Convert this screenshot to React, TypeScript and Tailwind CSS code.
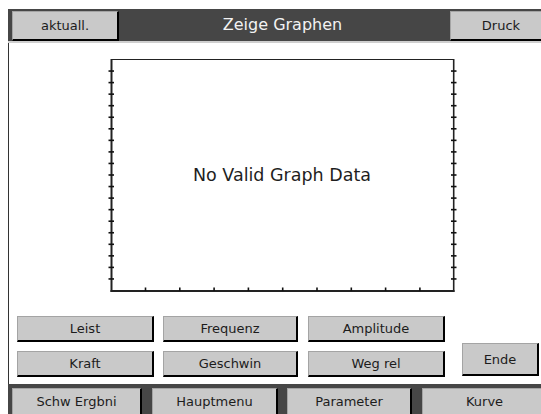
import React from "react";

const font = { fontFamily: '"DejaVu Sans", "Liberation Sans", sans-serif' };

function Btn({ label, className }: { label: string; className: string }) {
  return (
    <div
      className={
        "flex items-center justify-center bg-[#c9c9c9] text-[13px] text-[#1c1c1c] border-t border-l border-t-[#a4a4a4] border-l-[#a4a4a4] border-r-2 border-b-2 border-r-black border-b-black leading-none " +
        className
      }
    >
      {label}
    </div>
  );
}

function Graph() {
  const leftTicks = Array.from({ length: 19 }, (_, i) => 59.5 + 11.55 * (i + 1) - 50);
  const bottomTicks = Array.from({ length: 9 }, (_, i) => 111.2 + 34.3 * (i + 1) - 100);
  return (
    <svg width="365" height="250" className="ml-[91px] mt-[7px] block" viewBox="0 0 365 250">
      <line x1="11" y1="9.5" x2="354" y2="9.5" stroke="#222" strokeWidth="1.2" />
      <line x1="11.5" y1="9" x2="11.5" y2="242" stroke="#222" strokeWidth="2" />
      <line x1="353.7" y1="9" x2="353.7" y2="242" stroke="#222" strokeWidth="1.6" />
      <line x1="10.5" y1="241" x2="354.5" y2="241" stroke="#222" strokeWidth="2" />
      {leftTicks.map((y, i) => (
        <g key={i}>
          <line x1="8.5" y1={y} x2="14" y2={y} stroke="#111" strokeWidth="1.6" />
          <line x1="351" y1={y} x2="356.5" y2={y} stroke="#111" strokeWidth="1.6" />
        </g>
      ))}
      {bottomTicks.map((x, i) => (
        <line key={i} x1={x} y1="237.5" x2={x} y2="241" stroke="#111" strokeWidth="1.6" />
      ))}
      <text
        x="182"
        y="131"
        textAnchor="middle"
        fontSize="17.5"
        fill="#1e1e1e"
        style={font}
      >
        No Valid Graph Data
      </text>
    </svg>
  );
}

export default function App() {
  return (
    <div className="w-[541px] h-[414px] bg-white overflow-hidden pt-[9px] pl-[8px]" style={font}>
      <div className="w-[549px] flex flex-col">
        {/* header */}
        <div className="h-[32px] bg-[#464646] flex items-end justify-between px-[4px] relative">
          <Btn label="aktuall." className="w-[107px] h-[30px]" />
          <div className="absolute inset-0 flex items-center justify-center text-[16px] text-[#f2f2f2] pointer-events-none pb-[1px]">
            Zeige Graphen
          </div>
          <Btn label="Druck" className="w-[103px] h-[30px]" />
        </div>
        <div className="h-[2px] bg-[#cfcfcf]" />
        {/* content */}
        <div className="h-[341px] bg-white border-l border-[#333] flex flex-col">
          <Graph />
          <div className="mt-[16px] ml-[8px] flex items-end">
            <div className="flex flex-col gap-[9px]">
              <div className="flex">
                <Btn label="Leist" className="w-[137px] h-[26px]" />
                <Btn label="Frequenz" className="w-[135px] h-[26px] ml-[9px]" />
                <Btn label="Amplitude" className="w-[137px] h-[26px] ml-[10px]" />
              </div>
              <div className="flex">
                <Btn label="Kraft" className="w-[137px] h-[26px]" />
                <Btn label="Geschwin" className="w-[135px] h-[26px] ml-[9px]" />
                <Btn label="Weg rel" className="w-[137px] h-[26px] ml-[10px]" />
              </div>
            </div>
            <Btn label="Ende" className="w-[77px] h-[33px] ml-[17px] mb-[1px]" />
          </div>
        </div>
        {/* nav */}
        <div className="h-[40px] bg-[#464646] flex pt-[4px] pl-[4px]">
          <Btn label="Schw Ergbni" className="w-[130px] h-[28px]" />
          <Btn label="Hauptmenu" className="w-[126px] h-[28px] ml-[10px]" />
          <Btn label="Parameter" className="w-[125px] h-[28px] ml-[9px]" />
          <Btn label="Kurve" className="w-[126px] h-[28px] ml-[10px]" />
        </div>
      </div>
    </div>
  );
}
